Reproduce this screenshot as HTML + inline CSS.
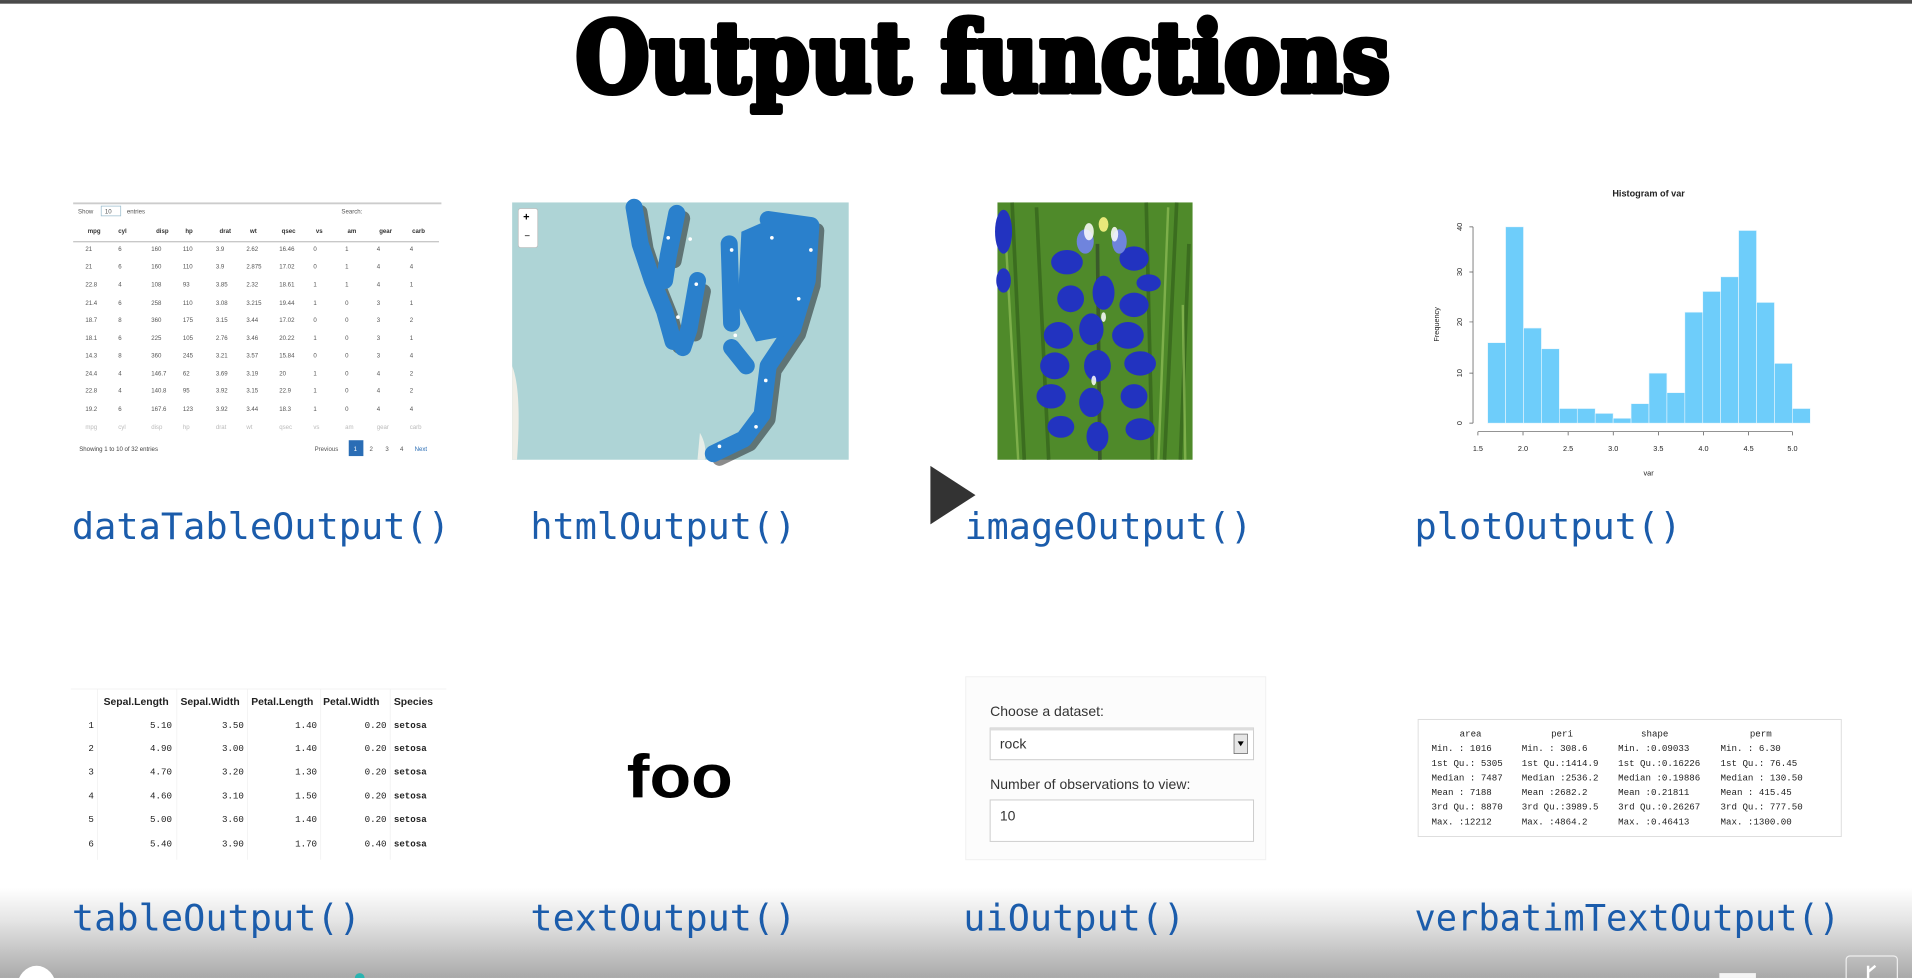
<!DOCTYPE html>
<html><head><meta charset="utf-8"><style>
html,body{margin:0;padding:0;background:#fff;overflow:hidden}
svg{display:block}
</style></head><body>
<svg width="1912" height="978" viewBox="0 0 1568 802" xmlns="http://www.w3.org/2000/svg">
<defs>
<linearGradient id="bg" x1="0" y1="0" x2="0" y2="1">
<stop offset="0" stop-color="#ffffff"/><stop offset="0.35" stop-color="#e6e6e6"/><stop offset="1" stop-color="#a9a9a9"/>
</linearGradient>
</defs>
<rect x="0" y="0" width="1568" height="802" fill="#fff"/>
<rect x="0" y="728" width="1568" height="74" fill="url(#bg)"/>
<rect x="0" y="0" width="1568" height="3" fill="#4a4a4a"/>

<!-- Title -->
<text x="472" y="75" font-family="DejaVu Serif, serif" font-weight="bold" font-size="80" textLength="668" lengthAdjust="spacingAndGlyphs" fill="#000" stroke="#000" stroke-width="5" stroke-linejoin="round">Output functions</text>

<!-- DataTable -->
<g font-family="Liberation Sans, sans-serif" font-size="5" fill="#555">
<rect x="60" y="166" width="302" height="1.5" fill="#ccc"/>
<text x="64" y="175">Show</text><rect x="83" y="169" width="16" height="8" fill="none" stroke="#9bc" stroke-width="0.6"/><text x="86" y="175">10</text><text x="104" y="175">entries</text>
<text x="280" y="175">Search:</text>
<rect x="60" y="198" width="300" height="0.6" fill="#999"/>
<g font-weight="bold" fill="#333">
<text x="72" y="191">mpg</text><text x="97" y="191">cyl</text><text x="128" y="191">disp</text><text x="152" y="191">hp</text><text x="180" y="191">drat</text><text x="205" y="191">wt</text><text x="231" y="191">qsec</text><text x="259" y="191">vs</text><text x="285" y="191">am</text><text x="311" y="191">gear</text><text x="338" y="191">carb</text>
</g>
<g>
<text x="70" y="206">21</text><text x="97" y="206">6</text><text x="124" y="206">160</text><text x="150" y="206">110</text><text x="177" y="206">3.9</text><text x="202" y="206">2.62</text><text x="229" y="206">16.46</text><text x="257" y="206">0</text><text x="283" y="206">1</text><text x="309" y="206">4</text><text x="336" y="206">4</text>
<text x="70" y="220">21</text><text x="97" y="220">6</text><text x="124" y="220">160</text><text x="150" y="220">110</text><text x="177" y="220">3.9</text><text x="202" y="220">2.875</text><text x="229" y="220">17.02</text><text x="257" y="220">0</text><text x="283" y="220">1</text><text x="309" y="220">4</text><text x="336" y="220">4</text>
<text x="70" y="235">22.8</text><text x="97" y="235">4</text><text x="124" y="235">108</text><text x="150" y="235">93</text><text x="177" y="235">3.85</text><text x="202" y="235">2.32</text><text x="229" y="235">18.61</text><text x="257" y="235">1</text><text x="283" y="235">1</text><text x="309" y="235">4</text><text x="336" y="235">1</text>
<text x="70" y="250">21.4</text><text x="97" y="250">6</text><text x="124" y="250">258</text><text x="150" y="250">110</text><text x="177" y="250">3.08</text><text x="202" y="250">3.215</text><text x="229" y="250">19.44</text><text x="257" y="250">1</text><text x="283" y="250">0</text><text x="309" y="250">3</text><text x="336" y="250">1</text>
<text x="70" y="264">18.7</text><text x="97" y="264">8</text><text x="124" y="264">360</text><text x="150" y="264">175</text><text x="177" y="264">3.15</text><text x="202" y="264">3.44</text><text x="229" y="264">17.02</text><text x="257" y="264">0</text><text x="283" y="264">0</text><text x="309" y="264">3</text><text x="336" y="264">2</text>
<text x="70" y="279">18.1</text><text x="97" y="279">6</text><text x="124" y="279">225</text><text x="150" y="279">105</text><text x="177" y="279">2.76</text><text x="202" y="279">3.46</text><text x="229" y="279">20.22</text><text x="257" y="279">1</text><text x="283" y="279">0</text><text x="309" y="279">3</text><text x="336" y="279">1</text>
<text x="70" y="293">14.3</text><text x="97" y="293">8</text><text x="124" y="293">360</text><text x="150" y="293">245</text><text x="177" y="293">3.21</text><text x="202" y="293">3.57</text><text x="229" y="293">15.84</text><text x="257" y="293">0</text><text x="283" y="293">0</text><text x="309" y="293">3</text><text x="336" y="293">4</text>
<text x="70" y="308">24.4</text><text x="97" y="308">4</text><text x="124" y="308">146.7</text><text x="150" y="308">62</text><text x="177" y="308">3.69</text><text x="202" y="308">3.19</text><text x="229" y="308">20</text><text x="257" y="308">1</text><text x="283" y="308">0</text><text x="309" y="308">4</text><text x="336" y="308">2</text>
<text x="70" y="322">22.8</text><text x="97" y="322">4</text><text x="124" y="322">140.8</text><text x="150" y="322">95</text><text x="177" y="322">3.92</text><text x="202" y="322">3.15</text><text x="229" y="322">22.9</text><text x="257" y="322">1</text><text x="283" y="322">0</text><text x="309" y="322">4</text><text x="336" y="322">2</text>
<text x="70" y="337">19.2</text><text x="97" y="337">6</text><text x="124" y="337">167.6</text><text x="150" y="337">123</text><text x="177" y="337">3.92</text><text x="202" y="337">3.44</text><text x="229" y="337">18.3</text><text x="257" y="337">1</text><text x="283" y="337">0</text><text x="309" y="337">4</text><text x="336" y="337">4</text>
</g>
<g fill="#bbb"><text x="70" y="352">mpg</text><text x="97" y="352">cyl</text><text x="124" y="352">disp</text><text x="150" y="352">hp</text><text x="177" y="352">drat</text><text x="202" y="352">wt</text><text x="229" y="352">qsec</text><text x="257" y="352">vs</text><text x="283" y="352">am</text><text x="309" y="352">gear</text><text x="336" y="352">carb</text></g>
<text x="65" y="370" fill="#444">Showing 1 to 10 of 32 entries</text>
<text x="258" y="370">Previous</text><rect x="286" y="361" width="12" height="13" fill="#2a6db5"/><text x="290" y="370" fill="#fff">1</text><text x="303" y="370">2</text><text x="316" y="370">3</text><text x="328" y="370">4</text><text x="340" y="370" fill="#2a6db5">Next</text>
</g>

<!-- Map -->
<rect x="420" y="166" width="276" height="211" fill="#aed4d6"/>
<path d="M420 300 Q428 320 424 377 L420 377 Z" fill="#f0eee6"/>
<path d="M574 355 Q580 365 578 377 L572 377 Z" fill="#e8eee8"/>
<rect x="425" y="171" width="16" height="32" rx="2" fill="#fff" stroke="#bbb" stroke-width="0.6"/>
<text x="429" y="181" font-size="9" font-family="Liberation Sans,sans-serif" font-weight="bold">+</text>
<text x="430" y="196" font-size="8" font-family="Liberation Sans,sans-serif">−</text>
<g fill="none" stroke="#000" stroke-opacity="0.45" stroke-linecap="round" stroke-linejoin="round" stroke-width="12" transform="translate(5,4)">
<path d="M520 170 L525 200 L535 230 L545 255 L552 280 M555 175 L548 210 M572 235 L565 270"/>
<path d="M632 180 L665 185 L662 230 L650 270 L630 300 L625 340 L610 360 L585 372"/>
</g>
<g fill="none" stroke="#2a80cc" stroke-linecap="round" stroke-linejoin="round">
<path stroke-width="14" d="M520 170 L525 200 L535 230 L545 255 L552 280 M555 175 L548 210 L545 230 M572 230 L565 270 L560 285"/>
<path stroke-width="14" d="M598 200 L600 265 M630 180 L665 185 L662 230 L650 270 L630 300 L625 340 L610 360 L585 372 M600 285 L612 300"/>
</g>
<path fill="#2a80cc" d="M608 190 L640 176 L668 184 L666 230 L648 275 L620 280 L605 250 Z"/>
<g fill="#fff"><circle cx="548" cy="195" r="1.5"/><circle cx="566" cy="196" r="1.5"/><circle cx="600" cy="205" r="1.5"/><circle cx="633" cy="195" r="1.5"/><circle cx="665" cy="205" r="1.5"/><circle cx="571" cy="233" r="1.5"/><circle cx="556" cy="260" r="1.5"/><circle cx="603" cy="275" r="1.5"/><circle cx="628" cy="312" r="1.5"/><circle cx="620" cy="350" r="1.5"/><circle cx="590" cy="366" r="1.5"/><circle cx="655" cy="245" r="1.5"/></g>

<!-- Flower -->
<rect x="818" y="166" width="160" height="211" fill="#4f8a2a"/>
<g stroke="#2f5a18" stroke-width="3" opacity="0.6"><path d="M830 166 L840 377 M965 166 L955 377 M850 170 L860 377 M940 166 L945 377 M975 200 L968 377"/></g>
<g stroke="#9cc860" stroke-width="2" opacity="0.6"><path d="M825 200 L835 377 M958 170 L950 377 M970 250 L972 377"/></g>
<path d="M900 200 L902 377" stroke="#3a5a2a" stroke-width="3"/>
<g fill="#2233c0">
<ellipse cx="875" cy="215" rx="13" ry="10"/><ellipse cx="930" cy="212" rx="12" ry="10"/>
<ellipse cx="878" cy="245" rx="11" ry="11"/><ellipse cx="905" cy="240" rx="9" ry="14"/><ellipse cx="930" cy="250" rx="12" ry="10"/><ellipse cx="942" cy="232" rx="10" ry="7"/>
<ellipse cx="868" cy="275" rx="12" ry="11"/><ellipse cx="895" cy="270" rx="10" ry="13"/><ellipse cx="925" cy="275" rx="13" ry="11"/>
<ellipse cx="865" cy="300" rx="12" ry="11"/><ellipse cx="900" cy="300" rx="11" ry="13"/><ellipse cx="935" cy="298" rx="13" ry="10"/>
<ellipse cx="862" cy="325" rx="12" ry="10"/><ellipse cx="895" cy="330" rx="10" ry="12"/><ellipse cx="930" cy="325" rx="11" ry="10"/>
<ellipse cx="870" cy="350" rx="11" ry="9"/><ellipse cx="900" cy="358" rx="9" ry="12"/><ellipse cx="935" cy="352" rx="12" ry="9"/>
<ellipse cx="823" cy="190" rx="7" ry="18"/><ellipse cx="823" cy="230" rx="6" ry="10"/>
</g>
<g fill="#6f84dd"><ellipse cx="890" cy="198" rx="7" ry="10"/><ellipse cx="918" cy="198" rx="6" ry="10"/></g>
<g fill="#fff" opacity="0.85"><ellipse cx="893" cy="190" rx="4" ry="7"/><ellipse cx="914" cy="192" rx="3" ry="6"/><ellipse cx="905" cy="260" rx="2" ry="4"/><ellipse cx="897" cy="312" rx="2" ry="4"/></g>
<ellipse cx="905" cy="184" rx="4" ry="6" fill="#e9e97a"/>

<!-- Histogram -->
<g font-family="Liberation Sans,sans-serif" font-size="6" fill="#222">
<text x="1352" y="161" text-anchor="middle" font-weight="bold" font-size="7.5">Histogram of var</text>
<g fill="#6ecdfa" stroke="#e9f6fd" stroke-width="0.5">
<rect x="1220" y="281" width="14.7" height="66"/><rect x="1234.7" y="186" width="14.7" height="161"/><rect x="1249.4" y="269" width="14.7" height="78"/><rect x="1264.1" y="286" width="14.7" height="61"/><rect x="1278.8" y="335" width="14.7" height="12"/><rect x="1293.5" y="335" width="14.7" height="12"/><rect x="1308.2" y="339" width="14.7" height="8"/><rect x="1322.9" y="343" width="14.7" height="4"/><rect x="1337.6" y="331" width="14.7" height="16"/><rect x="1352.3" y="306" width="14.7" height="41"/><rect x="1367" y="322" width="14.7" height="25"/><rect x="1381.7" y="256" width="14.7" height="91"/><rect x="1396.4" y="239" width="14.7" height="108"/><rect x="1411.1" y="227" width="14.7" height="120"/><rect x="1425.8" y="189" width="14.7" height="158"/><rect x="1440.5" y="248" width="14.7" height="99"/><rect x="1455.2" y="298" width="14.7" height="49"/><rect x="1469.9" y="335" width="14.7" height="12"/>
</g>
<path d="M1208 186 V347 M1205 347 H1208 M1205 306 H1208 M1205 264 H1208 M1205 223 H1208 M1205 186 H1208 M1212 354 H1470 M1212 354 v3 M1249 354 v3 M1286 354 v3 M1323 354 v3 M1360 354 v3 M1397 354 v3 M1434 354 v3 M1470 354 v3" stroke="#555" stroke-width="0.6" fill="none"/>
<g text-anchor="middle"><text x="1212" y="370">1.5</text><text x="1249" y="370">2.0</text><text x="1286" y="370">2.5</text><text x="1323" y="370">3.0</text><text x="1360" y="370">3.5</text><text x="1397" y="370">4.0</text><text x="1434" y="370">4.5</text><text x="1470" y="370">5.0</text><text x="1352" y="390">var</text></g>
<g text-anchor="middle"><text transform="translate(1199,347) rotate(-90)">0</text><text transform="translate(1199,306) rotate(-90)">10</text><text transform="translate(1199,264) rotate(-90)">20</text><text transform="translate(1199,223) rotate(-90)">30</text><text transform="translate(1199,186) rotate(-90)">40</text><text transform="translate(1180,266) rotate(-90)">Frequency</text></g>
</g>

<!-- play triangle -->
<path d="M763 382 L800 406 L763 430 Z" fill="#333"/>

<!-- labels -->
<g font-family="DejaVu Sans Mono, Liberation Mono, monospace" font-size="30" fill="#1b5cab">
<text x="59" y="442" textLength="310" lengthAdjust="spacingAndGlyphs">dataTableOutput()</text>
<text x="435" y="442" textLength="218" lengthAdjust="spacingAndGlyphs">htmlOutput()</text>
<text x="791" y="442" textLength="236" lengthAdjust="spacingAndGlyphs">imageOutput()</text>
<text x="1160" y="442" textLength="219" lengthAdjust="spacingAndGlyphs">plotOutput()</text>
<text x="59" y="763" textLength="237" lengthAdjust="spacingAndGlyphs">tableOutput()</text>
<text x="435" y="763" textLength="218" lengthAdjust="spacingAndGlyphs">textOutput()</text>
<text x="790" y="763" textLength="182" lengthAdjust="spacingAndGlyphs">uiOutput()</text>
<text x="1160" y="763" textLength="349" lengthAdjust="spacingAndGlyphs">verbatimTextOutput()</text>
</g>

<!-- tableOutput -->
<g font-family="Liberation Mono,monospace" font-size="7.5" fill="#222">
<path d="M58 565 H366 M80 565 V705 M145 565 V705 M203 565 V705 M263 565 V705 M320 565 V705" stroke="#f0f0f0" stroke-width="0.6"/>
<g font-family="Liberation Sans,sans-serif" font-weight="bold" font-size="8.5"><text x="85" y="578">Sepal.Length</text><text x="148" y="578">Sepal.Width</text><text x="206" y="578">Petal.Length</text><text x="265" y="578">Petal.Width</text><text x="323" y="578">Species</text></g>
<g text-anchor="end">
<text x="77" y="597">1</text><text x="141" y="597">5.10</text><text x="200" y="597">3.50</text><text x="260" y="597">1.40</text><text x="317" y="597">0.20</text>
<text x="77" y="616">2</text><text x="141" y="616">4.90</text><text x="200" y="616">3.00</text><text x="260" y="616">1.40</text><text x="317" y="616">0.20</text>
<text x="77" y="635">3</text><text x="141" y="635">4.70</text><text x="200" y="635">3.20</text><text x="260" y="635">1.30</text><text x="317" y="635">0.20</text>
<text x="77" y="655">4</text><text x="141" y="655">4.60</text><text x="200" y="655">3.10</text><text x="260" y="655">1.50</text><text x="317" y="655">0.20</text>
<text x="77" y="674">5</text><text x="141" y="674">5.00</text><text x="200" y="674">3.60</text><text x="260" y="674">1.40</text><text x="317" y="674">0.20</text>
<text x="77" y="694">6</text><text x="141" y="694">5.40</text><text x="200" y="694">3.90</text><text x="260" y="694">1.70</text><text x="317" y="694">0.40</text>
</g>
<g font-weight="bold"><text x="323" y="597">setosa</text><text x="323" y="616">setosa</text><text x="323" y="635">setosa</text><text x="323" y="655">setosa</text><text x="323" y="674">setosa</text><text x="323" y="694">setosa</text></g>
</g>

<!-- foo -->
<text x="514" y="654" font-family="Liberation Sans,sans-serif" font-weight="bold" font-size="50" textLength="87" lengthAdjust="spacingAndGlyphs">foo</text>

<!-- uiOutput -->
<rect x="792" y="555" width="246" height="150" fill="#fcfcfc" stroke="#f0f0f0" stroke-width="0.8"/>
<g font-family="Liberation Sans,sans-serif" font-size="11.5" fill="#333">
<text x="812" y="587">Choose a dataset:</text>
<rect x="812" y="597" width="216" height="26" fill="#fff" stroke="#ccc" stroke-width="0.8"/>
<rect x="812" y="597" width="216" height="2" fill="#ddd"/>
<text x="820" y="614">rock</text>
<rect x="1012" y="602" width="11" height="16" fill="#e6e6e6" stroke="#666" stroke-width="0.6"/>
<path d="M1015 608 L1020 608 L1017.5 612 Z" fill="#000"/>
<text x="812" y="647">Number of observations to view:</text>
<rect x="812" y="656" width="216" height="34" fill="#fff" stroke="#ccc" stroke-width="0.8"/>
<text x="820" y="673">10</text>
</g>

<!-- verbatim -->
<rect x="1163" y="590" width="347" height="96" fill="#fff" stroke="#ddd" stroke-width="0.8"/>
<g font-family="Liberation Mono,monospace" font-size="7.5" fill="#222">
<g text-anchor="middle"><text x="1206" y="604">area</text><text x="1281" y="604">peri</text><text x="1357" y="604">shape</text><text x="1444" y="604">perm</text></g>
<g>
<text y="616"><tspan x="1174">Min.   : 1016</tspan><tspan x="1248">Min.   : 308.6</tspan><tspan x="1327">Min.   :0.09033</tspan><tspan x="1411">Min.   :   6.30</tspan></text>
<text y="628"><tspan x="1174">1st Qu.: 5305</tspan><tspan x="1248">1st Qu.:1414.9</tspan><tspan x="1327">1st Qu.:0.16226</tspan><tspan x="1411">1st Qu.:  76.45</tspan></text>
<text y="640"><tspan x="1174">Median : 7487</tspan><tspan x="1248">Median :2536.2</tspan><tspan x="1327">Median :0.19886</tspan><tspan x="1411">Median : 130.50</tspan></text>
<text y="652"><tspan x="1174">Mean   : 7188</tspan><tspan x="1248">Mean   :2682.2</tspan><tspan x="1327">Mean   :0.21811</tspan><tspan x="1411">Mean   : 415.45</tspan></text>
<text y="664"><tspan x="1174">3rd Qu.: 8870</tspan><tspan x="1248">3rd Qu.:3989.5</tspan><tspan x="1327">3rd Qu.:0.26267</tspan><tspan x="1411">3rd Qu.: 777.50</tspan></text>
<text y="676"><tspan x="1174">Max.   :12212</tspan><tspan x="1248">Max.   :4864.2</tspan><tspan x="1327">Max.   :0.46413</tspan><tspan x="1411">Max.   :1300.00</tspan></text>
</g>
</g>

<!-- bottom controls -->
<ellipse cx="30" cy="810" rx="16" ry="18" fill="#fff"/>
<circle cx="295" cy="802" r="4" fill="#2ab3b0"/>
<rect x="1514" y="784" width="42" height="22" rx="3" fill="none" stroke="#eee" stroke-width="1"/>
<path d="M1532 792 L1532 802 M1532 797 L1538 792" stroke="#fff" stroke-width="2"/>
<rect x="1410" y="798" width="30" height="4" fill="#f4f4f4"/>
</svg>
</body></html>
